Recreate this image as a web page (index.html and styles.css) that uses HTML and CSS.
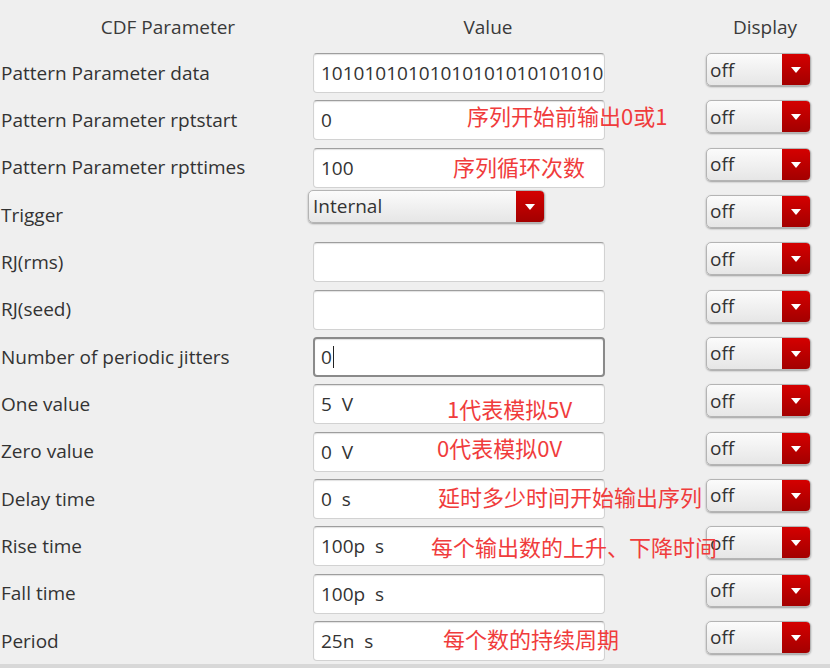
FILE: index.html
```html
<!DOCTYPE html>
<html>
<head>
<meta charset="utf-8">
<link rel="stylesheet" href="styles.css">
</head>
<body>
<div class="page">
  <div class="head">
    <div class="h1">CDF Parameter</div>
    <div class="h2">Value</div>
    <div class="h3">Display</div>
  </div>

  <div class="row">
    <div class="label">Pattern Parameter data</div>
    <div class="val"><div class="field">1010101010101010101010101010101010</div></div>
    <div class="disp"><div class="combo small"><span class="txt">off</span><span class="arrow"></span></div></div>
  </div>
  <div class="row">
    <div class="label">Pattern Parameter rptstart</div>
    <div class="val"><div class="field">0</div></div>
    <div class="disp"><div class="combo small"><span class="txt">off</span><span class="arrow"></span></div></div>
  </div>
  <div class="row">
    <div class="label">Pattern Parameter rpttimes</div>
    <div class="val"><div class="field">100</div></div>
    <div class="disp"><div class="combo small"><span class="txt">off</span><span class="arrow"></span></div></div>
  </div>
  <div class="row">
    <div class="label">Trigger</div>
    <div class="val"><div class="combo wide"><span class="txt">Internal</span><span class="arrow"></span></div></div>
    <div class="disp"><div class="combo small"><span class="txt">off</span><span class="arrow"></span></div></div>
  </div>
  <div class="row">
    <div class="label">RJ(rms)</div>
    <div class="val"><div class="field"></div></div>
    <div class="disp"><div class="combo small"><span class="txt">off</span><span class="arrow"></span></div></div>
  </div>
  <div class="row">
    <div class="label">RJ(seed)</div>
    <div class="val"><div class="field"></div></div>
    <div class="disp"><div class="combo small"><span class="txt">off</span><span class="arrow"></span></div></div>
  </div>
  <div class="row">
    <div class="label">Number of periodic jitters</div>
    <div class="val"><div class="field focus">0<span class="caret"></span></div></div>
    <div class="disp"><div class="combo small"><span class="txt">off</span><span class="arrow"></span></div></div>
  </div>
  <div class="row">
    <div class="label">One value</div>
    <div class="val"><div class="field">5&nbsp;&nbsp;V</div></div>
    <div class="disp"><div class="combo small"><span class="txt">off</span><span class="arrow"></span></div></div>
  </div>
  <div class="row">
    <div class="label">Zero value</div>
    <div class="val"><div class="field">0&nbsp;&nbsp;V</div></div>
    <div class="disp"><div class="combo small"><span class="txt">off</span><span class="arrow"></span></div></div>
  </div>
  <div class="row">
    <div class="label">Delay time</div>
    <div class="val"><div class="field">0&nbsp;&nbsp;s</div></div>
    <div class="disp"><div class="combo small"><span class="txt">off</span><span class="arrow"></span></div></div>
  </div>
  <div class="row">
    <div class="label">Rise time</div>
    <div class="val"><div class="field">100p&nbsp;&nbsp;s</div></div>
    <div class="disp"><div class="combo small"><span class="txt">off</span><span class="arrow"></span></div></div>
  </div>
  <div class="row">
    <div class="label">Fall time</div>
    <div class="val"><div class="field">100p&nbsp;&nbsp;s</div></div>
    <div class="disp"><div class="combo small"><span class="txt">off</span><span class="arrow"></span></div></div>
  </div>
  <div class="row">
    <div class="label">Period</div>
    <div class="val"><div class="field">25n&nbsp;&nbsp;s</div></div>
    <div class="disp"><div class="combo small"><span class="txt">off</span><span class="arrow"></span></div></div>
  </div>
  <div class="band"></div>

  <span class="note n1">序列开始前输出0或1</span>
  <span class="note n2">序列循环次数</span>
  <span class="note n3">1代表模拟5V</span>
  <span class="note n4">0代表模拟0V</span>
  <span class="note n5">延时多少时间开始输出序列</span>
  <span class="note n6">每个输出数的上升、下降时间</span>
  <span class="note n7">每个数的持续周期</span>
</div>
</body>
</html>
```
FILE: styles.css
```css
html, body {
  margin: 0;
  padding: 0;
  background: #efefef;
}
body {
  width: 830px;
  height: 668px;
  overflow: hidden;
  font-family: "Open Sans", "Noto Sans", sans-serif;
  font-size: 19px;
  color: #333333;
}
.page {
  position: relative;
  width: 830px;
  height: 668px;
}
.head {
  display: grid;
  grid-template-columns: 336px 304px 1fr;
  height: 49px;
  align-items: center;
  padding-top: 4px;
  box-sizing: border-box;
  color: #3a3a3a;
}
.head > div { text-align: center; }
.head .h3 { padding-left: 60px; }

.row {
  display: grid;
  grid-template-columns: 308px 398px 124px;
  height: 47.33px;
}
.label {
  display: flex;
  align-items: center;
  padding-left: 1px;
  white-space: nowrap;
}
.val, .disp {
  padding-top: 4px;
}
.field {
  margin-left: 5px;
  width: 292px;
  height: 40px;
  box-sizing: border-box;
  background: #ffffff;
  border: 1px solid #d2d2d2;
  border-top-color: #9e9e9e;
  border-radius: 4px;
  box-shadow: inset 0 1px 1px rgba(0,0,0,0.12);
  padding: 0 7px;
  display: flex;
  align-items: center;
  white-space: nowrap;
  overflow: hidden;
  color: #333;
}
.field.focus {
  border: 2px solid #8a8a8a;
  padding-left: 6px;
}
.caret {
  display: inline-block;
  width: 1px;
  height: 22px;
  background: #222;
  margin-left: 1px;
}
.combo {
  display: flex;
  height: 33px;
  box-sizing: border-box;
  border: 1px solid #b4b4b4;
  border-radius: 5px;
  background: linear-gradient(#fbfbfb, #e6e6e6);
  box-shadow: 0 1px 2px rgba(0,0,0,0.35);
  overflow: hidden;
}
.combo.small { width: 105px; }
.combo.wide { width: 237px; margin-top: -5px; }
.combo .txt {
  flex: 1;
  display: flex;
  align-items: center;
  padding-left: 3px;
  color: #333;
}
.combo.wide .txt { padding-left: 4px; }
.combo .arrow {
  width: 28px;
  background: linear-gradient(#d40000, #a30000);
  position: relative;
}
.combo .arrow::after {
  content: "";
  position: absolute;
  left: 9px;
  top: 13px;
  border-left: 5px solid transparent;
  border-right: 5px solid transparent;
  border-top: 6px solid #ffffff;
}
.band {
  height: 4px;
  background: #d8d8d8;
}
.note {
  position: absolute;
  font-family: "Noto Sans CJK SC", "Noto Sans", sans-serif;
  font-size: 22px;
  line-height: 22px;
  color: #f03c3c;
  white-space: nowrap;
}
.n1 { left: 467px; top: 104px; }
.n2 { left: 453px; top: 155px; }
.n3 { left: 447px; top: 397px; }
.n4 { left: 437px; top: 436px; }
.n5 { left: 438px; top: 485px; }
.n6 { left: 431px; top: 535px; }
.n7 { left: 443px; top: 627px; }
```
